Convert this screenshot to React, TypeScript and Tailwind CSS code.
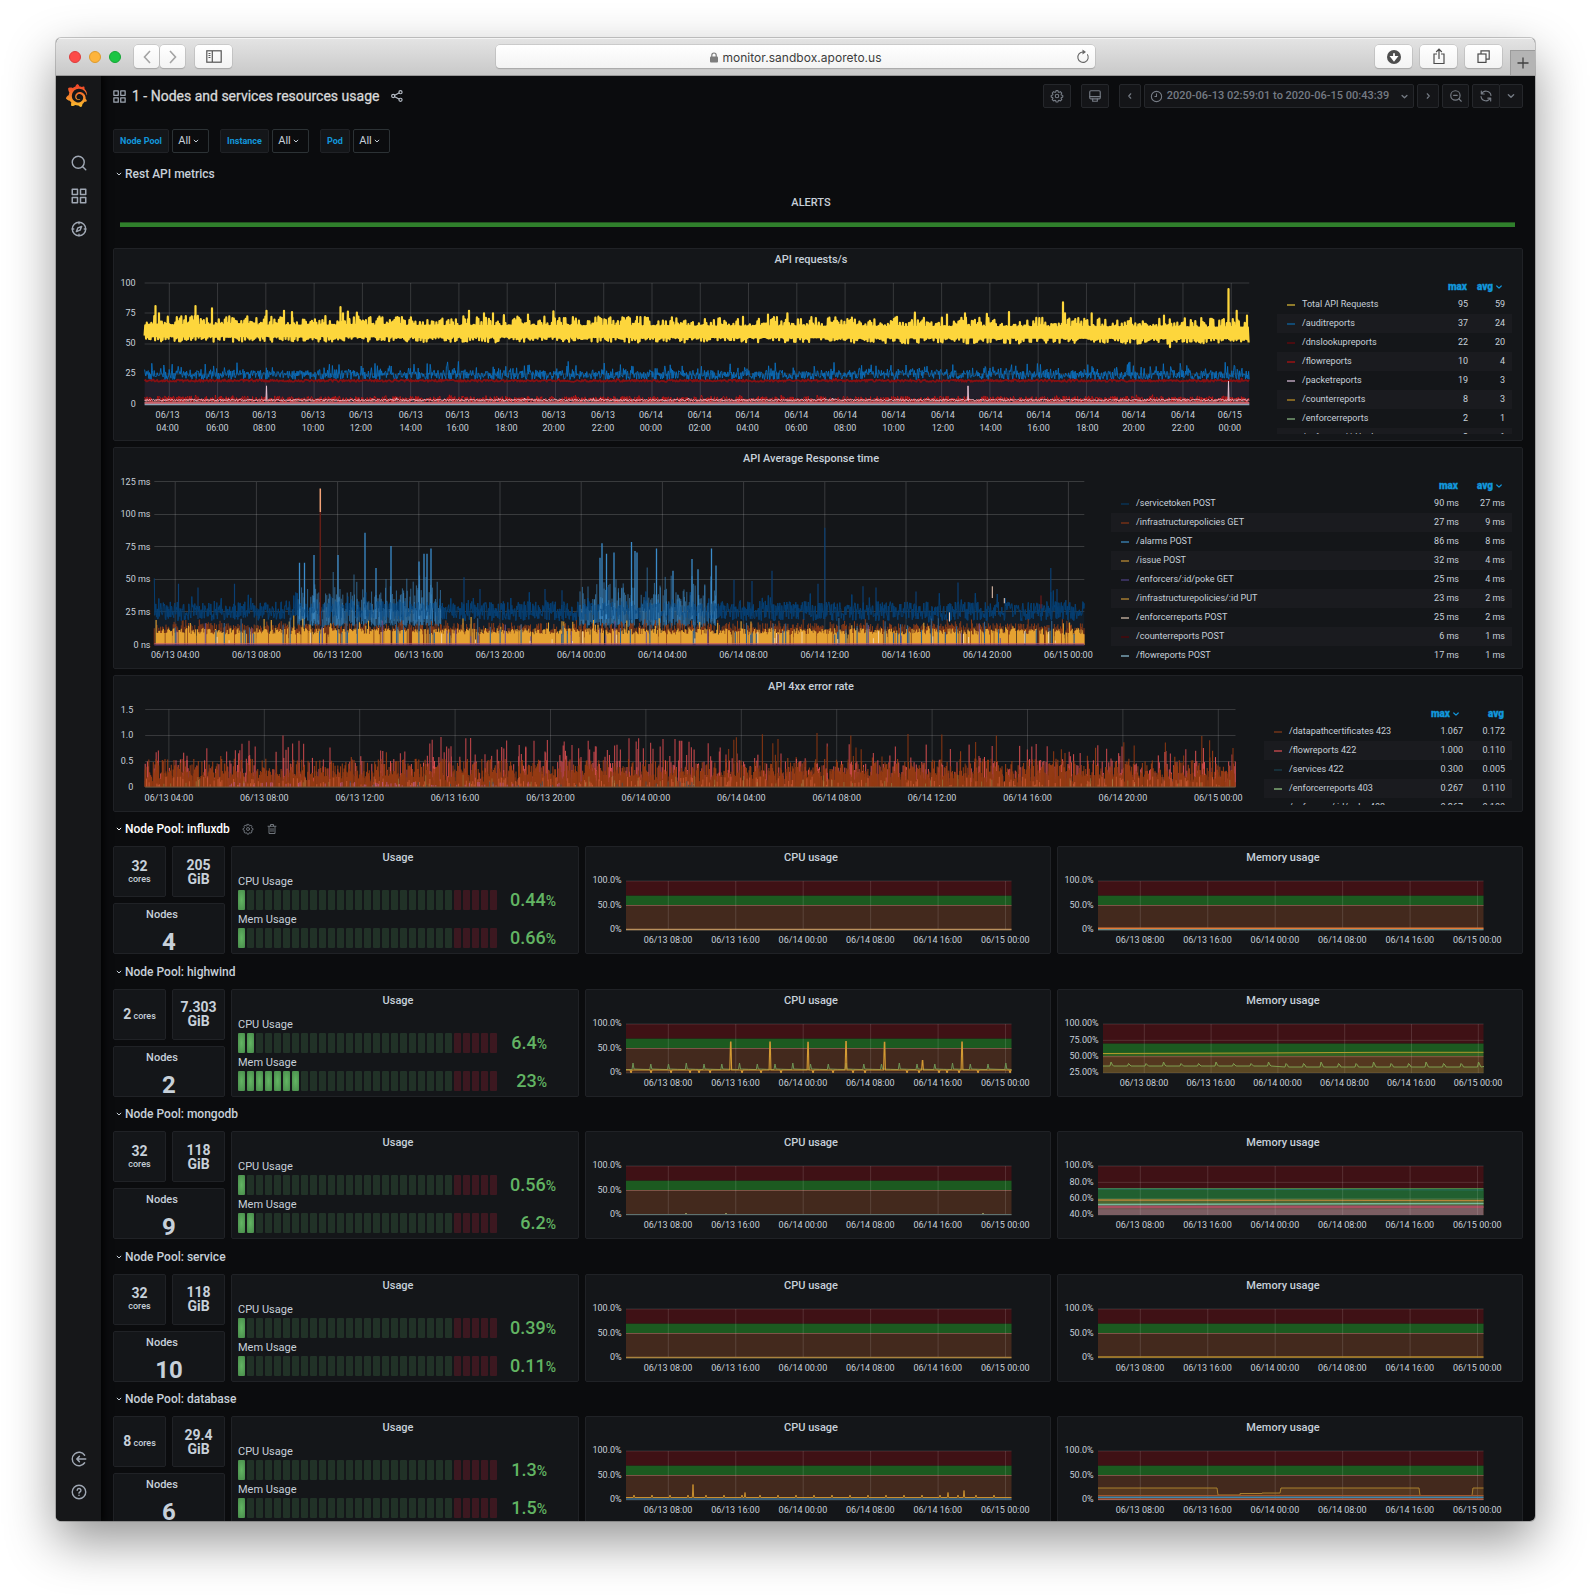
import React from "react";
import { SiGrafana } from "react-icons/si";

/* ---------- helpers ---------- */

function rng(seed: number) {
  let a = seed;
  return () => {
    a = (a + 0x6d2b79f5) | 0;
    let t = Math.imul(a ^ (a >>> 15), 1 | a);
    t = (t + Math.imul(t ^ (t >>> 7), 61 | t)) ^ t;
    return ((t ^ (t >>> 14)) >>> 0) / 4294967296;
  };
}

type Pt = [number, number];
const line = (pts: Pt[]) => "M" + pts.map(([x, y]) => x.toFixed(1) + " " + y.toFixed(1)).join("L");
const area = (pts: Pt[], base: number) =>
  line(pts) + `L${pts[pts.length - 1][0]} ${base}L${pts[0][0]} ${base}Z`;

/* ---------- icons ---------- */

type IconProps = { className?: string; children?: React.ReactNode; sw?: number };
const Icon = ({ className = "size-[15px]", children, sw = 2 }: IconProps) => (
  <svg viewBox="0 0 24 24" className={className} fill="none" stroke="currentColor" strokeWidth={sw} strokeLinecap="round" strokeLinejoin="round">
    {children}
  </svg>
);
const Apps = ({ className }: IconProps) => (
  <Icon className={className}>
    <rect x="3" y="3" width="7" height="7" /><rect x="14" y="3" width="7" height="7" />
    <rect x="3" y="14" width="7" height="7" /><rect x="14" y="14" width="7" height="7" />
  </Icon>
);
const Down = ({ className = "size-[12px]" }: IconProps) => (
  <Icon className={className} sw={2.4}><path d="M7.500 10 12 14.300 16.500 10" /></Icon>
);
const Left = ({ className = "size-[12px]" }: IconProps) => (
  <Icon className={className} sw={2.3}><path d="M13.500 7.500 9.500 12l4 4.500" /></Icon>
);
const Right = ({ className = "size-[12px]" }: IconProps) => (
  <Icon className={className} sw={2.3}><path d="M10.500 7.500l4 4.500-4 4.500" /></Icon>
);
const SearchIcon = () => (
  <Icon className="size-[18px]" sw={1.9}><circle cx="11" cy="11" r="8" /><path d="m17 17 4 4" /></Icon>
);
const CompassIcon = () => (
  <Icon className="size-[18px]" sw={1.9}>
    <circle cx="12" cy="12" r="9" />
    <path d="m15.500 8.500-2 5-5 2 2-5Z" />
    <path d="M12 3v2M12 19v2M3 12h2M19 12h2" />
  </Icon>
);
const SignInIcon = () => (
  <Icon className="size-[18px]" sw={1.9}>
    <path d="M19.500 7A9 9 0 1 0 19.500 17" /><path d="M21 12H9.500M12.500 8.500 9 12l3.500 3.500" />
  </Icon>
);
const HelpIcon = () => (
  <Icon className="size-[18px]" sw={1.9}>
    <circle cx="12" cy="12" r="9" /><path d="M9.600 9.700a2.500 2.500 0 1 1 3.600 2.300c-.8.400-1.200.8-1.200 1.500" /><path d="M12 16.400v.1" />
  </Icon>
);
const ShareIcon = ({ className }: IconProps) => (
  <Icon className={className}>
    <circle cx="5.500" cy="12" r="2.700" /><circle cx="18" cy="5.500" r="2.700" /><circle cx="18" cy="18.500" r="2.700" />
    <path d="m8 10.800 7.500-4M8 13.200l7.500 4" />
  </Icon>
);
const Gear = ({ className }: IconProps) => (
  <Icon className={className} sw={1.9}>
    <circle cx="12" cy="12" r="3" />
    <path d="M10.300 2.800h3.400l.6 2.400 1.300.6 2.200-1.300 2.400 2.400-1.200 2.100.5 1.400 2.400.6v2.900l-2.400.6-.6 1.300 1.300 2.300-2.400 2.300-2.200-1.200-1.300.5-.6 2.500h-3.400l-.6-2.500-1.300-.5-2.200 1.200-2.400-2.300 1.300-2.300-.6-1.300-2.400-.6v-2.900l2.400-.6.5-1.400-1.200-2.100 2.400-2.400 2.200 1.300 1.300-.6Z" />
  </Icon>
);
const MonitorIcon = ({ className }: IconProps) => (
  <Icon className={className}>
    <rect x="3" y="3" width="18" height="14" rx="2" /><path d="M3 13h18M8 17v4h8v-4" />
  </Icon>
);
const ClockIcon = ({ className }: IconProps) => (
  <Icon className={className}><circle cx="12" cy="12" r="9.500" /><path d="M12 7v5H9" /></Icon>
);
const ZoomOutIcon = ({ className }: IconProps) => (
  <Icon className={className}><circle cx="11" cy="11" r="8" /><path d="m17 17 4 4M8 11h6" /></Icon>
);
const SyncIcon = ({ className }: IconProps) => (
  <Icon className={className}>
    <path d="M4.500 8.500A8.500 8.500 0 0 1 20.500 11M4 3.500v5h5M19.500 15.500A8.500 8.500 0 0 1 3.500 13M20 20.500v-5h-5" />
  </Icon>
);
const TrashIcon = ({ className }: IconProps) => (
  <Icon className={className}>
    <path d="M4 6.500h16M9 6V3h6v3M6 7v14h12V7" /><path d="M10 11v6M14 11v6" />
  </Icon>
);

/* ---------- browser toolbar ---------- */

const btn = "flex h-[23px] items-center justify-center rounded-[4px] bg-gradient-to-b from-white to-[#f3f3f3] shadow-[0_0_0_0.5px_#b5b5b5,0_1px_1px_#9c9c9c]";

function BrowserBar() {
  return (
    <div className="flex h-[38px] shrink-0 items-center border-b border-[#9a9a9a] bg-gradient-to-b from-[#e4e4e4] to-[#c9c9c9] pl-[13px] shadow-[inset_0_1px_0_#f4f4f4]">
      <div className="flex gap-[8px]">
        <span className="size-[12px] rounded-full border-[0.5px] border-[#dd3c3c] bg-[#fc4b48]" />
        <span className="size-[12px] rounded-full border-[0.5px] border-[#dd9a2c] bg-[#fdb43c]" />
        <span className="size-[12px] rounded-full border-[0.5px] border-[#14a535] bg-[#1bc544]" />
      </div>
      <div className="ml-[13px] flex gap-[1px] text-[#a3a3a3]">
        <div className={btn + " w-[25px]"}>
          <svg width="8" height="14" fill="none" stroke="currentColor" strokeWidth="1.600"><path d="M7 1 1.500 7 7 13" /></svg>
        </div>
        <div className={btn + " w-[25px]"}>
          <svg width="8" height="14" fill="none" stroke="currentColor" strokeWidth="1.600"><path d="M1 1l5.500 6L1 13" /></svg>
        </div>
      </div>
      <div className={btn + " ml-[10px] w-[37px] text-[#555]"}>
        <svg width="16" height="13" fill="none" stroke="currentColor" strokeWidth="1.200"><rect x=".8" y=".8" width="14.400" height="11.400" /><path d="M6.300 1v11M2.500 3.500h2M2.500 5.500h2M2.500 7.500h2" /></svg>
      </div>
      <div className={btn + " ml-[264px] w-[599px] pl-[30px] font-['Inter'] text-[12px] text-[#3d3d3d]"}>
        <div className="flex flex-1 items-center justify-center gap-[4px] pr-[10px] pt-[2px]">
          <svg width="8" height="11" className="mb-px text-[#7d7d7d]"><rect x="0" y="4.500" width="8" height="6" rx="1" fill="currentColor" /><path d="M1.800 5V3.200a2.200 2.200 0 0 1 4.400 0V5" fill="none" stroke="currentColor" strokeWidth="1.200" /></svg>
          <span className="tracking-[0.04px]">monitor.sandbox.aporeto.us</span>
        </div>
        <svg width="14" height="15" className="mr-[5px] text-[#666]" fill="none" stroke="currentColor" strokeWidth="1.100"><path d="M11.300 5.200A5.200 5.200 0 1 1 7 3" /><path d="M6.500.5 10 3 6.500 5.500Z" fill="currentColor" stroke="none" /></svg>
      </div>
      <div className="ml-[280px] flex gap-[8px] text-[#4b4b4b]">
        <div className={btn + " w-[37px]"}>
          <svg width="14" height="14"><circle cx="7" cy="7" r="7" fill="#4d4d4d" /><path d="M7 3.200v5M4.400 7 7 10.200 9.600 7Z" stroke="#fff" strokeWidth="1.800" fill="#fff" /></svg>
        </div>
        <div className={btn + " w-[37px]"}>
          <svg width="12" height="17" fill="none" stroke="currentColor" strokeWidth="1.200"><path d="M4 6H1v9.500h10V6H8M6 11V1.500M3.200 4 6 1.200 8.800 4" /></svg>
        </div>
        <div className={btn + " w-[37px]"}>
          <svg width="13" height="13" fill="none" stroke="currentColor" strokeWidth="1.200"><rect x="1" y="4" width="8" height="8.400" /><path d="M4 4V.8h8.200v8.400H9" /></svg>
        </div>
      </div>
      <div className="ml-[8px] flex h-[25px] flex-1 items-center justify-center self-end border-l border-t border-[#9b9b9b] bg-[#b4b4b4] pr-px">
        <svg width="12" height="12" stroke="#3f3f3f" strokeWidth="1.300"><path d="M6 .5v11M.5 6h11" /></svg>
      </div>
    </div>
  );
}

function SideMenu() {
  return (
    <div className="z-10 flex w-[45px] shrink-0 flex-col items-center bg-[#161719] text-[#9fa7b3] shadow-[0_0_8px_2px_#000]">
      <svg width="0" height="0" className="absolute">
        <linearGradient id="flame" x1="0" y1="0" x2="0" y2="1"><stop offset="0.1" stopColor="#f0482a" /><stop offset="1" stopColor="#fbc02d" /></linearGradient>
      </svg>
      <SiGrafana className="mt-[8px] -ml-[4px] size-[23px]" fill="url(#flame)" />
      <div className="mt-[47px] flex flex-col gap-[15px]"><SearchIcon /><Apps className="size-[18px]" /><CompassIcon /></div>
      <div className="mb-[20px] mt-auto flex flex-col gap-[15px]"><SignInIcon /><HelpIcon /></div>
    </div>
  );
}

/* ---------- dashboard header ---------- */

const tool = "flex h-[24px] items-center justify-center rounded-[2px] border border-[#25272b] bg-[#141518]";

function Header() {
  return (
    <div className="flex h-[24px] items-center">
      <Apps className="-ml-px size-[15px] text-[#9fa7b3]" />
      <h1 className="ml-[5px] text-[14px] leading-[24px] text-[#d8d9da] [-webkit-text-stroke:0.3px_#d8d9da]">1 - Nodes and services resources usage</h1>
      <ShareIcon className="ml-[11px] size-[14px] text-[#b5bcc5]" />
      <div className="ml-auto flex text-[#757b84]">
        <div className={tool + " w-[28px]"}><Gear className="size-[14px]" /></div>
        <div className={tool + " ml-[10px] w-[28px]"}><MonitorIcon className="size-[14px]" /></div>
        <div className={tool + " ml-[10px] w-[22px]"}><Left /></div>
        <div className={tool + " ml-[3px] w-[270px] pl-[3px] text-[11px] font-medium"}>
          <ClockIcon className="size-[13px] shrink-0" />
          <span className="ml-[4px] whitespace-nowrap">2020-06-13 02:59:01 to 2020-06-15 00:43:39</span>
          <Down className="ml-[9px] size-[13px] shrink-0" />
        </div>
        <div className={tool + " ml-[3px] w-[22px]"}><Right /></div>
        <div className={tool + " ml-[3px] w-[27px]"}><ZoomOutIcon className="size-[14px]" /></div>
        <div className={tool + " ml-[3px] w-[28px]"}><SyncIcon className="size-[14px]" /></div>
        <div className={tool + " -ml-px w-[24px]"}><Down className="size-[14px]" /></div>
      </div>
    </div>
  );
}

function Variable({ label, width }: { label: string; width: string }) {
  return (
    <div className="flex gap-[3px]">
      <div className={"flex h-[24px] items-center justify-center rounded-[2px] border border-[#202226] bg-[#141619] pt-[2px] text-[9px] font-bold text-[#1296db] " + width}>{label}</div>
      <div className="flex h-[24px] w-[37px] items-center justify-center rounded-[2px] border border-[#2c3235] bg-[#0b0c0e] pr-[2px] text-[11px] text-[#c7d0d9]">
        All<Down className="size-[10px]" />
      </div>
    </div>
  );
}

/* ---------- panels ---------- */

function Panel({ className = "", title, children }: { className?: string; title?: string; children?: React.ReactNode }) {
  return (
    <section className={"flex flex-col overflow-hidden rounded-[2px] border border-[#202226] bg-[#141619] " + className}>
      {title && <h2 className="h-[21px] shrink-0 pr-[14px] text-center text-[11px] font-medium leading-[21px] text-[#c7d0d9]">{title}</h2>}
      {children}
    </section>
  );
}

function RowTitle({ title, active = false }: { title: string; active?: boolean }) {
  return (
    <div className={"flex h-[22.500px] items-center pl-px pt-px text-[12px] font-medium " + (active ? "text-white" : "text-[#c7d0d9]")}>
      <Down className="size-[10px]" />
      <span className="ml-px">{title}</span>
      {active && (
        <span className="flex items-center gap-[12px] pl-[12px] text-[#6f747b]"><Gear className="size-[12px]" /><TrashIcon className="size-[12px]" /></span>
      )}
    </div>
  );
}

type LegendRow = [string, string, string, string];
function Legend({ rows, left, top = "mt-[7px]", avgW, sort = "avg" }: { rows: LegendRow[]; left: string; top?: string; avgW: string; sort?: string }) {
  return (
    <div className={"mb-[6px] mr-[10px] flex-1 overflow-hidden text-[9px] text-[#c7d0d9] " + left + " " + top}>
      <div className="flex h-[18px] items-center pr-[8px] pt-px text-[10px] font-black text-[#1296db] [-webkit-text-stroke:0.3px_#1296db]">
        <span className="flex flex-1 items-center justify-end">max{sort === "max" && <Down className="size-[12px]" />}</span>
        <span className={"flex items-center justify-end " + avgW}>avg{sort === "avg" && <Down className="-mr-px size-[12px]" />}</span>
      </div>
      {rows.map(([name, max, avg, color], i) => (
        <div key={name} className={"flex h-[19px] items-center pl-[10px] pr-[7px] " + (i % 2 ? "bg-[#1a1b1f]" : "")}>
          <span className="h-[2px] w-[8px]" style={{ background: color }} />
          <span className="ml-[7px] flex-1 whitespace-nowrap text-[9.050px]">{name}</span>
          <span>{max}</span>
          <span className={"text-right " + avgW}>{avg}</span>
        </div>
      ))}
    </div>
  );
}

const AxisText = ({ x, y, anchor = "middle", children }: { x: number; y: number; anchor?: "middle" | "end"; children: React.ReactNode }) => (
  <text x={x} y={y + 3.200} textAnchor={anchor} fontSize="9" fill="#c7d0d9">{children}</text>
);

/* API requests per second */
const req = (() => {
  const Y = (v: number) => 404 - v * 1.21;
  const L = 144.600, R = 1249.300;
  const r = rng(7);
  const spikes: [number, number][] = [[155.500, 81], [159, 75], [195.500, 81], [212, 79], [266.500, 77], [284, 77], [292, 76], [340.500, 80], [343, 75], [469, 77], [484, 75], [493, 75], [528, 74], [600, 71], [637, 72], [743, 72], [768, 74], [897, 72], [947, 74], [965, 75], [1009, 76], [1063, 84], [1065, 75], [1091.700, 75], [1170, 47], [1164, 73], [1228.500, 95], [1236.700, 77], [1247, 73]];
  const yellow: Pt[] = [];
  for (let x = L, i = 0; x <= R; x += 0.750, i++) {
    const base = 61 - 2 * ((x - L) / (R - L));
    const k = r();
    let v = i % 2 ? base + 4 + k * k * 8 : base - 4.500 - k * k * 5;
    if (i % 2 && r() < 0.070) v += r() * 7;
    yellow.push([x, Y(v)]);
  }
  for (const [x, v] of spikes) yellow.push([x - 0.100, Y(57)], [x, Y(v)], [x + 0.100, Y(57)]);
  yellow.sort((a, b) => a[0] - b[0]);
  const noise = (lo: number, hi: number, sp: number, spH: number, step: number): Pt[] => {
    const out: Pt[] = [];
    for (let x = L; x <= R; x += step) out.push([x, Y(lo + r() * (hi - lo) + (r() < sp ? r() * spH : 0))]);
    return out;
  };
  return {
    Y, L, R, yellow,
    blue: noise(20, 28, 0.200, 7.500, 0.600),
    dns: noise(18.300, 20.200, 0.050, 1, 0.900),
    flow: noise(0.500, 6.500, 0.120, 1.800, 0.600),
    flow2: noise(1, 4.500, 0, 0, 0.700),
    packet: noise(2.700, 3.900, 0.030, 1.500, 1),
    low: noise(0.800, 2.600, 0, 0, 1.300),
  };
})();
const reqTicks = [165, 214, 260, 308, 355, 404, 450, 498, 544.500, 593, 640, 688, 735, 783, 831, 878.500, 927, 974, 1021, 1069, 1114.500, 1163, 1209];

function RequestsChart() {
  const { Y, L, R } = req;
  return (
    <svg width="1156" height="169" viewBox="114 270 1156 169" className="shrink-0">
      <g stroke="#fff" strokeOpacity="0.150">
        {[0, 25, 50, 75, 100].map((v) => <path key={v} d={`M${L} ${Math.round(Y(v))}H${R}`} />)}
        {reqTicks.map((_, i) => <path key={i} d={`M${169.300 + 48.270 * i} 283V404`} />)}
      </g>
      <path d={area(req.blue, 404)} fill="#1f78c1" fillOpacity="0.070" />
      <path d={area(req.dns, 404)} fill="#8f3b58" fillOpacity="0.110" />
      <g fill="none" strokeLinejoin="round">
        <path d={line(req.blue)} stroke="#0a6ebd" strokeWidth="0.900" />
        <path d={line(req.dns)} stroke="#890f12" strokeWidth="1.700" />
        <path d={line(req.flow)} stroke="#c01313" strokeWidth="0.900" />
        <path d={line(req.flow2)} stroke="#d4565a" strokeWidth="1" />
        <path d={line(req.low)} stroke="#7d6a66" strokeWidth="0.800" />
        <path d={line(req.packet)} stroke="#f2b8c4" strokeWidth="1" />
        <path d={`M266 400L266.500 ${Y(15)}L267 400M967.700 400L968 ${Y(15)}L968.500 400M1228 400L1228.500 ${Y(19)}L1229 400`} stroke="#e9c3d4" strokeWidth="1" />
        <path d={`M${L} 403H${R}`} stroke="#c9616a" strokeWidth="2" />
        <path d={`M${L} 404.500H${R}`} stroke="#8fa3b5" strokeWidth="1.500" />
        <path d={line(req.yellow)} stroke="#fdd63c" strokeWidth="2.200" />
      </g>
      {[0, 25, 50, 75, 100].map((v) => <AxisText key={v} x={135.700} y={Y(v) - 0.700} anchor="end">{v}</AxisText>)}
      {reqTicks.map((t, i) => (
        <g key={t}>
          <AxisText x={t * 1.01748 - 0.300} y={414.600}>{i < 10 ? "06/13" : i < 22 ? "06/14" : "06/15"}</AxisText>
          <AxisText x={t * 1.01748 - 0.300} y={427.600}>{String((4 + i * 2) % 24).padStart(2, "0") + ":00"}</AxisText>
        </g>
      ))}
    </svg>
  );
}

/* Average response time */
const resp = (() => {
  const B = 645, k = 1.304, L = 154.300, R = 1084.300;
  const Y = (v: number) => B - v * k;
  const r = rng(21);
  const dark: Pt[] = [];
  for (let x = L; x <= R; x += 0.500) dark.push([x, Y(18.500 + r() * 15 + (r() < 0.080 ? r() * 14 - 2 : 0))]);
  dark[0][1] = Y(51);
  const bars = (a: number, b: number, p: number, lo: () => number, hi: () => number, step = 1) => {
    let d = "";
    for (let x = a; x <= b; x += step) if (r() < p) d += `M${x.toFixed(1)} ${Y(lo()).toFixed(1)}V${Y(hi()).toFixed(1)}`;
    return d;
  };
  const burst = (a: number, b: number) =>
    bars(a, b, 0.800, () => 13 + r() * 6, () => 26 + r() * r() * 28, 1.200) +
    bars(a, b, 0.550, () => 15, () => 35 + r() * r() * 26, 1.600);
  const spots = (list: [number, number][]) => list.map(([x, v]) => `M${x} ${Y(20)}V${Y(v)}`).join("");
  return {
    Y, L, R, B, dark,
    darkSpikes: spots([[178.500, 47], [198, 44], [234.500, 47], [464, 52], [480, 43], [545, 43], [562, 42], [734, 50], [752, 49], [772, 57], [818, 47], [824.800, 90], [863, 45], [876, 44], [916, 41], [958, 48], [1050.800, 59], [1057, 43]]),
    light: burst(298, 441) + burst(580, 716),
    lightSpikes: spots([[299.500, 63], [304.500, 63], [314, 69], [338, 69], [365, 86], [376, 59], [391, 76], [419, 64], [424, 70], [427, 70], [431, 74], [600, 67], [602, 78], [606.500, 70], [614, 71], [631.500, 79], [635, 72], [637, 71], [656.500, 74], [673, 57], [692, 66], [698, 58], [711.500, 74], [716, 61]]),
    rust: bars(L, R, 0.800, () => 0, () => 11 + r() * 6 + (r() < 0.080 ? 3 : 0), 0.900),
    amber: bars(L, R, 0.860, () => 0, () => 8 + r() * 5 + (r() < 0.060 ? r() * 10 : 0), 0.900),
    amber2: bars(L, R, 0.400, () => 0, () => 5 + r() * 7, 1.300),
    blueCuts: bars(L, R, 0.100, () => 0, () => 8 + r() * 13, 1.400),
    purple: bars(L, R, 0.040, () => 0, () => 5 + r() * 14, 1.500),
    pale: bars(L, R, 0.040, () => 1, () => 3 + r() * 8, 1.700),
  };
})();

function ResponseChart() {
  const { Y, L, R, B } = resp;
  const ticks = Array.from({ length: 12 }, (_, i) => 175.200 + 81.200 * i);
  return (
    <svg width="993" height="197" viewBox="114 469 993 197" className="shrink-0">
      <g stroke="#fff" strokeOpacity="0.160">
        {[0, 25, 50, 75, 100, 125].map((v) => <path key={v} d={`M${L} ${Math.round(Y(v)) - 0.500}H${R}`} />)}
        {ticks.map((x) => <path key={x} d={`M${x} 482V644`} />)}
      </g>
      <path d={area(resp.dark, B)} fill="#0a3a63" fillOpacity="0.200" />
      <g fill="none" strokeWidth="1">
        <path d={resp.darkSpikes} stroke="#0a3f73" strokeWidth="1.200" />
        <path d={line(resp.dark)} stroke="#063f73" strokeOpacity="0.900" />
        <path d={resp.light} stroke="#3b87c2" strokeOpacity="0.680" />
        <path d={resp.lightSpikes} stroke="#3b8ccb" strokeWidth="1.300" />
        <path d={line(resp.dark)} stroke="#063f73" strokeOpacity="0.550" strokeWidth="0.700" />
        <path d={resp.rust} stroke="#8a3a17" />
        <path d={resp.amber2} stroke="#b98232" />
        <path d={resp.amber} stroke="#e5a231" strokeWidth="1.100" />
        <path d={resp.blueCuts} stroke="#33608a" strokeWidth="1.100" />
        <path d={resp.purple} stroke="#6f4f8c" />
        <path d={resp.pale} stroke="#f0cfa0" />
        <path d={`M320.300 ${Y(102)}V${Y(15)}`} stroke="#641f17" strokeWidth="1.500" />
        <path d={`M320.300 ${Y(120)}V${Y(102)}`} stroke="#f3a277" strokeWidth="1.500" />
        <path d={`M992.300 ${Y(45)}V${Y(36)}M1004.300 ${Y(36)}V${Y(32)}M949.500 ${Y(25)}V${Y(18)}`} stroke="#f0cdb8" />
        <path d={`M1041 ${Y(38)}V${Y(28)}`} stroke="#7d1a1a" />
        <path d={`M${L} ${B - 1.500}H${R}`} stroke="#c0566a" strokeOpacity="0.700" />
        <path d={`M${L} ${B}H${R}`} stroke="#4b2d5e" strokeWidth="1.500" />
      </g>
      {["0 ns", "25 ms", "50 ms", "75 ms", "100 ms", "125 ms"].map((t, i) => <AxisText key={t} x={150.500} y={Y(i * 25) - 0.700} anchor="end">{t}</AxisText>)}
      {ticks.map((x, i) => (
        <AxisText key={x} x={x} y={654.500}>{`06/${13 + Math.floor((4 + i * 4) / 24)} ${String((4 + i * 4) % 24).padStart(2, "0")}:00`}</AxisText>
      ))}
    </svg>
  );
}

/* 4xx error rate */
const errs = (() => {
  const B = 787.300, k = 51.300, L = 145.200, R = 1235.500;
  const Y = (v: number) => B - v * k;
  const r = rng(99);
  const bars = (p: number, lo: number, hi: number, step: number, spP = 0, spH = 0, a = L, b = R) => {
    let d = "";
    for (let x = a; x <= b; x += step) if (r() < p) d += `M${x.toFixed(1)} ${B}V${Y(lo + r() * (hi - lo) + (r() < spP ? r() * spH : 0)).toFixed(1)}`;
    return d;
  };
  return {
    Y, L, R, B,
    red: bars(0.450, 0.150, 0.520, 1.100, 0.120, 0.400),
    redTall: bars(0.120, 0.500, 0.850, 2.200) + bars(0.300, 0.550, 0.950, 2.400, 0, 0, 425, 760) + ([[283, 1], [299, 0.900], [249, 0.900], [441, 0.970], [534, 0.900], [663, 0.930], [675, 0.930], [681, 0.900]] as Pt[]).map(([x, v]) => `M${x} ${B}V${Y(v)}`).join(""),
    rust: bars(0.680, 0.180, 0.550, 0.900, 0.030, 0.300),
    rustTall: bars(0.150, 0.450, 1.050, 2.600, 0, 0, 700, R),
    rustBase: bars(1, 0.080, 0.320, 0.900),
    salmon: bars(0.300, 0.030, 0.200, 1.300),
    pink: bars(0.250, 0.020, 0.100, 1.400, 0, 0, 230, 560),
    green: bars(0.080, 0.050, 0.240, 1.700),
    slate: bars(0.150, 0.020, 0.120, 1.700, 0, 0, 340, 700),
  };
})();

function ErrorChart() {
  const { Y, L, R, B } = errs;
  const ticks = Array.from({ length: 12 }, (_, i) => 168.900 + 95.400 * i);
  return (
    <svg width="1144" height="112" viewBox="114 697.500 1144 112" className="shrink-0">
      <g stroke="#fff" strokeOpacity="0.150">
        {[0, 0.5, 1, 1.5].map((v) => <path key={v} d={`M${L} ${Math.round(Y(v))}H${R}`} />)}
        {ticks.map((x) => <path key={x} d={`M${x} 710V787`} />)}
      </g>
      <g fill="none" strokeWidth="1">
        <path d={errs.redTall} stroke="#c9484c" strokeOpacity="0.850" strokeWidth="1.200" />
        <path d={errs.rustTall} stroke="#7a3212" strokeWidth="1.200" />
        <path d={errs.red} stroke="#d94f50" />
        <path d={errs.rust} stroke="#933a13" strokeWidth="1.100" />
        <path d={errs.rustBase} stroke="#933a13" />
        <path d={errs.salmon} stroke="#d5613c" strokeOpacity="0.700" />
        <path d={errs.green} stroke="#9aa05a" strokeOpacity="0.600" strokeWidth="0.700" />
        <path d={errs.pink} stroke="#c25c9a" strokeOpacity="0.700" />
        <path d={errs.slate} stroke="#3c5058" strokeOpacity="0.800" />
        <path d={`M${L} ${B + 0.300}H${R}`} stroke="#6d5a3e" />
      </g>
      {["0", "0.5", "1.0", "1.5"].map((t, i) => <AxisText key={t} x={133.300} y={Y(i * 0.500) - 0.500} anchor="end">{t}</AxisText>)}
      {ticks.map((x, i) => (
        <AxisText key={x} x={x} y={798.300}>{`06/${13 + Math.floor((4 + i * 4) / 24)} ${String((4 + i * 4) % 24).padStart(2, "0")}:00`}</AxisText>
      ))}
    </svg>
  );
}

/* ---------- node pool charts ---------- */

const smallLabels = ["06/13 08:00", "06/13 16:00", "06/14 00:00", "06/14 08:00", "06/14 16:00", "06/15 00:00"];

function BandChart({ labels = ["100.0%", "50.0%", "0%"], min = 0, left = 41, first = 83.300, step = 67.450, children }:
  { labels?: string[]; min?: number; left?: number; first?: number; step?: number; children?: React.ReactNode }) {
  const Y = (v: number) => 84.500 - ((v - min) / (100 - min)) * 49;
  const right = 426.500;
  return (
    <svg width="464" height="84" viewBox="1 22.500 464 84" className="shrink-0">
      <rect x={left} y="35.500" width={right - left} height={Y(70) - 35.500} fill="#3f1115" />
      <rect x={left} y={Y(70)} width={right - left} height={Y(50) - Y(70)} fill="#1c5a20" />
      <rect x={left} y={Y(50)} width={right - left} height={84.500 - Y(50)} fill="#43291d" />
      <path d={`M${left} ${Y(50)}H${right}`} stroke="#6b3a2c" />
      <g stroke="#fff" strokeOpacity="0.130">
        {labels.map((t, i) => <path key={t} d={`M${left} ${35.500 + (i * 49) / (labels.length - 1)}H${right}`} />)}
        {smallLabels.map((t, i) => <path key={t} d={`M${first + step * i} 35.500V84.500`} />)}
      </g>
      <g fill="none">{children}</g>
      {labels.map((t, i) => <AxisText key={t} x={left - 4.300} y={34.700 + (i * 49) / (labels.length - 1)} anchor="end">{t}</AxisText>)}
      {smallLabels.map((t, i) => <AxisText key={t} x={first + step * i - 0.300} y={94}>{t}</AxisText>)}
    </svg>
  );
}

const H = ({ y, c, w = 1 }: { y: number; c: string; w?: number }) => <path d={`M41 ${y}H426.500`} stroke={c} strokeWidth={w} />;

const highwindCpu = (() => {
  const green: Pt[] = [[41, 81]], amber: Pt[] = [[41, 81.500]];
  for (let i = 0; i < 22; i++) {
    const x = 48 + i * 17.750;
    green.push([x - 1, 81], [x, i % 3 ? 75.500 : 74.500], [x + 1, 80.500], [x + 9, 80.800]);
  }
  green.push([426.500, 81]);
  const ev: [number, number][] = [[46, 84], [66, 84], [86, 84], [105, 84], [114, 84], [125, 84], [145.700, 53.500], [157, 84], [176, 84], [185, 53.500], [196, 84], [223, 53.800], [228, 84], [248, 84], [261, 53], [268, 84], [280, 84], [299.500, 53.800], [322, 84], [334, 84], [337.500, 72], [354, 84], [362, 84], [374, 84], [377, 53.500], [393, 84], [425, 84]];
  for (const [x, y] of ev) amber.push([x - 0.900, 81.500], [x - 0.200, y], [x + 0.300, y], [x + 0.900, 81.500]);
  amber.push([426.500, 82]);
  return { green: green.filter((p) => p[0] <= 426.500), amber };
})();

const highwindMem = (() => {
  const pts: Pt[] = [[46, 77.500]];
  for (let i = 0; i < 22; i++) {
    const x = 54 + i * 17.500;
    const b = i > 9 ? 78.500 : 77.500;
    pts.push([x - 1, b], [x, i % 3 ? 75 : 73.500], [x + 1.500, 76.500], [x + 2.500, b]);
  }
  pts.push([427, 78]);
  return pts.filter((p) => p[0] <= 427);
})();

const databaseCpu = (() => {
  const pts: Pt[] = [[41, 82]];
  for (let x = 49, i = 0; x < 424; x += 18, i++) pts.push([x - 0.700, 82], [x, 79.500], [x + 0.700, 82]);
  for (const [x, y] of [[108, 69], [160, 77], [363, 77], [379, 75]] as Pt[]) pts.push([x - 0.700, 82], [x, y], [x + 0.700, 82]);
  pts.sort((a, b) => a[0] - b[0]);
  pts.push([426.500, 82]);
  return pts;
})();

type Pool = { name: string; cores: string; mem: string; nodes: string; cpu: string; ram: string; cpuLit: number; ramLit: number; pad: string; cpuChart: React.ReactNode; memChart: React.ReactNode };

const pools: Pool[] = [
  {
    name: "influxdb", cores: "32", mem: "205", nodes: "4", cpu: "0.44", ram: "0.66", cpuLit: 1, ramLit: 1, pad: "pr-[22px]",
    cpuChart: <BandChart><H y={84} c="#b98f5c" w={1.500} /></BandChart>,
    memChart: <BandChart><H y={84} c="#6d8c88" w={1.500} /><H y={82.700} c="#e07a38" w={1.600} /></BandChart>,
  },
  {
    name: "highwind", cores: "2", mem: "7.303", nodes: "2", cpu: "6.4", ram: "23", cpuLit: 2, ramLit: 7, pad: "pr-[31px]",
    cpuChart: (
      <BandChart>
        <path d={line(highwindCpu.green)} stroke="#6d9455" />
        <path d={line(highwindCpu.amber)} stroke="#d49a33" strokeWidth="1.100" />
      </BandChart>
    ),
    memChart: (
      <BandChart labels={["100.00%", "75.00%", "50.00%", "25.00%"]} min={25} left={46} first={87.300} step={66.800}>
        <rect x="46" y="64.500" width="380.500" height="20" fill="#d49a33" fillOpacity="0.120" />
        <path d={line(highwindMem) + "L427 84.500L46 84.500Z"} fill="#7e9b3c" fillOpacity="0.170" />
        <path d={line(highwindMem)} stroke="#7f9f50" />
        <path d="M46 65L200 64.500L320 63.800H426.500" stroke="#b39a2c" />
      </BandChart>
    ),
  },
  {
    name: "mongodb", cores: "32", mem: "118", nodes: "9", cpu: "0.56", ram: "6.2", cpuLit: 1, ramLit: 2, pad: "pr-[22px]",
    cpuChart: <BandChart><H y={84} c="#5f7270" w={1.200} /><path d="M100 83.500l1-1 1 1M140 83.500l1-1 1 1M397 83.500l1-1 1 1" stroke="#8c8b57" /></BandChart>,
    memChart: (
      <BandChart labels={["100.0%", "80.0%", "60.0%", "40.0%"]} min={40}>
        <rect x="41" y="58.500" width="385.500" height="12" fill="#215f30" />
        <rect x="41" y="69.500" width="385.500" height="5" fill="#4d6532" />
        <rect x="41" y="74.500" width="385.500" height="10" fill="#745754" />
        <path d="M41 84.500V79H300L426 77V84.500Z" fill="#7b5e63" />
        <H y={68} c="#4d7a4f" w={0.500} />
        <path d="M41 58H426.500" stroke="#4e7f42" /><path d="M41 58.500L426.500 59.500" stroke="#26756c" strokeWidth="0.800" />
        <path d="M41 69.500L426.500 70" stroke="#b8863a" strokeWidth="1.300" />
        <path d="M41 74L426.500 73" stroke="#76b99b" strokeWidth="1.400" />
        <H y={76.500} c="#b94d64" w={1.400} />
        <g stroke="#fff" strokeOpacity="0.120">{smallLabels.map((t, i) => <path key={t} d={`M${83.300 + 67.450 * i} 58V84.500`} />)}</g>
      </BandChart>
    ),
  },
  {
    name: "service", cores: "32", mem: "118", nodes: "10", cpu: "0.39", ram: "0.11", cpuLit: 1, ramLit: 1, pad: "pr-[22px]",
    cpuChart: <BandChart><H y={84} c="#a9823f" w={1.300} /></BandChart>,
    memChart: <BandChart><H y={83.500} c="#b38a2e" w={1.700} /></BandChart>,
  },
  {
    name: "database", cores: "8", mem: "29.4", nodes: "6", cpu: "1.3", ram: "1.5", cpuLit: 1, ramLit: 1, pad: "pr-[31px]",
    cpuChart: <BandChart><path d={line(databaseCpu)} stroke="#c98f2e" /><H y={83.500} c="#366d92" w={1.500} /></BandChart>,
    memChart: (
      <BandChart>
        <path d="M41 72.500H160V79.500H183V78H205V77.500H223V72.500H362V80H415V72.500H426.500V84.500H41Z" fill="#d49a33" fillOpacity="0.120" />
        <path d="M41 72.500H160L161 79.500H183V78H205V77.500H223L224 72.500H362L363 80H415L416 72.500H426.500" stroke="#a9802f" />
        <H y={80} c="#a3552c" w={1} /><H y={81.700} c="#4187ad" w={1.600} /><H y={83.700} c="#a8604e" w={1.600} />
      </BandChart>
    ),
  },
];

function Gauge({ label, value, lit, pad }: { label: string; value: string; lit: number; pad: string }) {
  return (
    <div className="h-[38px]">
      <div className="h-[17px] text-[11px] leading-[17px] text-[#c7d0d9]">{label}</div>
      <div className="flex h-[20px] items-center">
        <div className="flex gap-[2px]">
          {Array.from({ length: 29 }, (_, i) => (
            <span key={i} className={"h-[20px] w-[7px] rounded-[1px] " + (i < lit ? "bg-[radial-gradient(#63b563,#478a4a)]" : i < 24 ? "bg-[#213227]" : "bg-[#3c1820]")} />
          ))}
        </div>
        <div className={"flex-1 whitespace-nowrap pb-px text-right text-[#62b463] " + pad}>
          <span className="text-[18px] font-medium">{value}</span><span className="text-[14px] font-medium">%</span>
        </div>
      </div>
    </div>
  );
}

function PoolRow({ pool }: { pool: Pool }) {
  return (
    <>
      <RowTitle title={"Node Pool: " + pool.name} active={pool.name === "influxdb"} />
      <div className="grid h-[108px] shrink-0 grid-cols-24 grid-rows-[108px] gap-[6px] text-[#c7d0d9]">
        <div className="col-span-2 grid grid-cols-2 grid-rows-[51px_51px] gap-[6px]">
          <Panel className="items-center justify-center">
            {pool.cores.length > 1 ? (
              <div className="text-center"><div className="text-[14px] font-bold leading-[14px]">{pool.cores}</div><div className="text-[9px] font-medium leading-[12px]">cores</div></div>
            ) : (
              <div className="text-[9px] font-medium"><span className="text-[14px] font-bold">{pool.cores}</span> cores</div>
            )}
          </Panel>
          <Panel className="items-center justify-center">
            <div className="text-center text-[14px] font-bold leading-[14px]">{pool.mem}<br />GiB</div>
          </Panel>
          <Panel className="col-span-2" title="Nodes"><div className="text-center text-[24px] font-bold leading-[35px]">{pool.nodes}</div></Panel>
        </div>
        <Panel className="col-span-6" title="Usage">
          <div className="mt-[5px] flex flex-col pl-[6px]">
            <Gauge label="CPU Usage" value={pool.cpu} lit={pool.cpuLit} pad={pool.pad} />
            <Gauge label="Mem Usage" value={pool.ram} lit={pool.ramLit} pad={pool.pad} />
          </div>
        </Panel>
        <Panel className="col-span-8" title="CPU usage">{pool.cpuChart}</Panel>
        <Panel className="col-span-8" title="Memory usage">{pool.memChart}</Panel>
      </div>
    </>
  );
}

/* ---------- page ---------- */

export default function App() {
  return (
    <div className="h-[1595px] w-[1591px] overflow-hidden bg-white pl-[56px] pt-[38px] font-['Roboto',sans-serif]">
      <div className="h-[1483px] w-[1479px] rounded-[5px] shadow-[0_0_0_1px_rgba(0,0,0,0.2),0_20px_50px_rgba(0,0,0,0.42)]">
        <div className="flex h-full flex-col overflow-hidden rounded-[5px] bg-[#0b0c0e]">
          <BrowserBar />
          <div className="flex min-h-0 flex-1 overflow-hidden">
            <SideMenu />
            <main className="flex flex-1 flex-col overflow-hidden pl-[12px] pr-[12px] pt-[8px]">
              <Header />
              <div className="mt-[21px] flex gap-[11px]">
                <Variable label="Node Pool" width="w-[56px]" />
                <Variable label="Instance" width="w-[49px]" />
                <Variable label="Pod" width="w-[30px]" />
              </div>
              <div className="mt-[9px] flex shrink-0 flex-col gap-[6px]">
                <RowTitle title="Rest API metrics" />
                <div className="h-[51px]">
                  <h2 className="pr-[14px] pt-px text-center text-[11px] font-medium leading-[22px] text-[#c7d0d9]">ALERTS</h2>
                  <div className="ml-[7px] mr-[8px] mt-[8.500px] h-[5px] border-t border-[#225320] bg-[#2f802b]" />
                </div>
                <Panel className="h-[193.500px]" title="API requests/s">
                  <div className="flex min-h-0 flex-1">
                    <RequestsChart />
                    <Legend left="ml-[7px]" top="mt-[7.500px]" avgW="w-[37px]" rows={[
                      ["Total API Requests", "95", "59", "#8f7b2b"], ["/auditreports", "37", "24", "#124a72"], ["/dnslookupreports", "22", "20", "#4a0c10"],
                      ["/flowreports", "10", "4", "#7a1416"], ["/packetreports", "19", "3", "#8e7e90"], ["/counterreports", "8", "3", "#7f6323"],
                      ["/enforcerreports", "2", "1", "#5d7a5b"], ["/enforcers/:id/poke", "2", "1", "#5f7f8e"],
                    ]} />
                  </div>
                </Panel>
                <Panel className="h-[222px]" title="API Average Response time">
                  <div className="flex min-h-0 flex-1">
                    <ResponseChart />
                    <Legend left="ml-[4px]" avgW="w-[46px]" rows={[
                      ["/servicetoken POST", "90 ms", "27 ms", "#0b2b45"], ["/infrastructurepolicies GET", "27 ms", "9 ms", "#5c2a18"], ["/alarms POST", "86 ms", "8 ms", "#2d5f82"],
                      ["/issue POST", "32 ms", "4 ms", "#80622c"], ["/enforcers/:id/poke GET", "25 ms", "4 ms", "#37305a"], ["/infrastructurepolicies/:id PUT", "23 ms", "2 ms", "#80622c"],
                      ["/enforcerreports POST", "25 ms", "2 ms", "#8d8075"], ["/counterreports POST", "6 ms", "1 ms", "#3d0c10"], ["/flowreports POST", "17 ms", "1 ms", "#5f7f8e"],
                    ]} />
                  </div>
                </Panel>
                <Panel className="h-[136.500px]" title="API 4xx error rate">
                  <div className="flex min-h-0 flex-1">
                    <ErrorChart />
                    <Legend left="ml-[6px]" avgW="w-[42px]" sort="max" rows={[
                      ["/datapathcertificates 423", "1.067", "0.172", "#5a2c18"], ["/flowreports 422", "1.000", "0.110", "#903a3e"], ["/services 422", "0.300", "0.005", "#17303a"],
                      ["/enforcerreports 403", "0.267", "0.110", "#66865f"], ["/enforcers/:id/poke 403", "0.267", "0.100", "#5f7f8e"],
                    ]} />
                  </div>
                </Panel>
                {pools.map((p) => <PoolRow key={p.name} pool={p} />)}
              </div>
            </main>
          </div>
        </div>
      </div>
    </div>
  );
}
